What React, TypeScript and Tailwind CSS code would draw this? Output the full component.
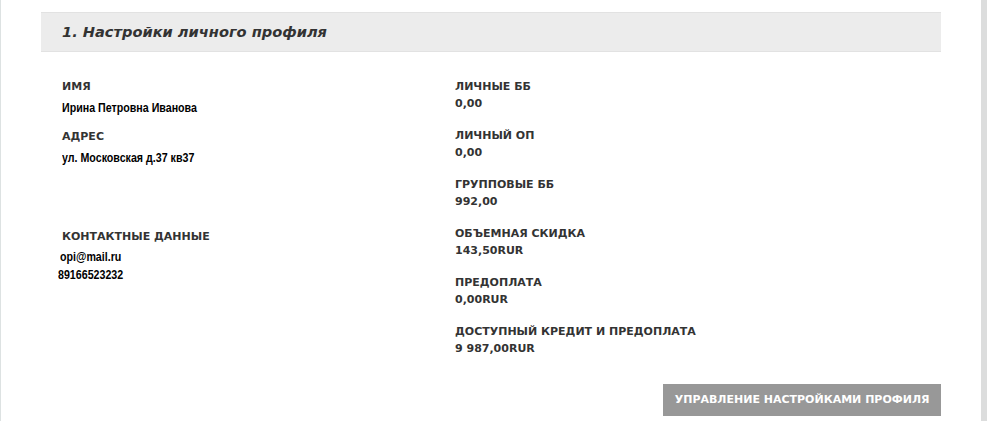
const stats = [
  { label: 'Личные ББ', value: '0,00' },
  { label: 'Личный ОП', value: '0,00' },
  { label: 'Групповые ББ', value: '992,00' },
  { label: 'Объемная скидка', value: '143,50RUR' },
  { label: 'Предоплата', value: '0,00RUR' },
  { label: 'Доступный кредит и предоплата', value: '9 987,00RUR' },
]

const verdana = "font-['Verdana','DejaVu_Sans',sans-serif]"
// no narrow face installed, so squeeze Liberation Sans a little
const narrow =
  "font-['Liberation_Sans_Narrow','Arial_Narrow','Liberation_Sans',sans-serif] font-bold origin-left scale-x-[0.82] text-[13px] leading-[17px] text-black"

function Label({ children }: { children: React.ReactNode }) {
  return (
    <div className={`${verdana} text-[11px] leading-[17px] font-bold uppercase text-[#333]`}>
      {children}
    </div>
  )
}

export default function App() {
  return (
    <div className="flex h-[421px] w-[987px] overflow-hidden bg-white">
      <div className="flex-1 border-l border-[#dde2e2] pt-3 pl-10">
        <div className="w-[900px]">
          <div className="flex h-10 items-center border-y border-[#e2e2e2] bg-[#ececec] pl-[21px]">
            <h2 className={`${verdana} text-[14.6px] font-bold italic text-[#333]`}>
              1. Настройки личного профиля
            </h2>
          </div>

          <div className="flex pt-[26px] pl-[21px]">
            <div className="w-[393px]">
              <Label>Имя</Label>
              <div className={`${narrow} mt-1`}>Ирина Петровна Иванова</div>
              <div className="mt-3">
                <Label>Адрес</Label>
              </div>
              <div className={`${narrow} mt-1`}>ул. Московская д.37 кв37</div>
              <div className="mt-[62px]">
                <Label>Контактные данные</Label>
              </div>
              <div className={`${narrow} mt-[3px] -ml-0.5`}>opi@mail.ru</div>
              <div className={`${narrow} mt-px -ml-1`}>89166523232</div>
            </div>

            <div className="flex flex-col gap-[15px]">
              {stats.map((s) => (
                <div key={s.label}>
                  <Label>{s.label}</Label>
                  <div className={`${verdana} text-[11px] leading-[17px] font-bold text-[#333]`}>
                    {s.value}
                  </div>
                </div>
              ))}
            </div>
          </div>

          <div className="flex justify-end pt-[27px]">
            <button
              className={`${verdana} h-8 bg-[#989898] px-[11.5px] text-[11px] font-bold uppercase text-white`}
            >
              Управление настройками профиля
            </button>
          </div>
        </div>
      </div>
      <div className="w-[6px] bg-[#dcdddd]" />
    </div>
  )
}
